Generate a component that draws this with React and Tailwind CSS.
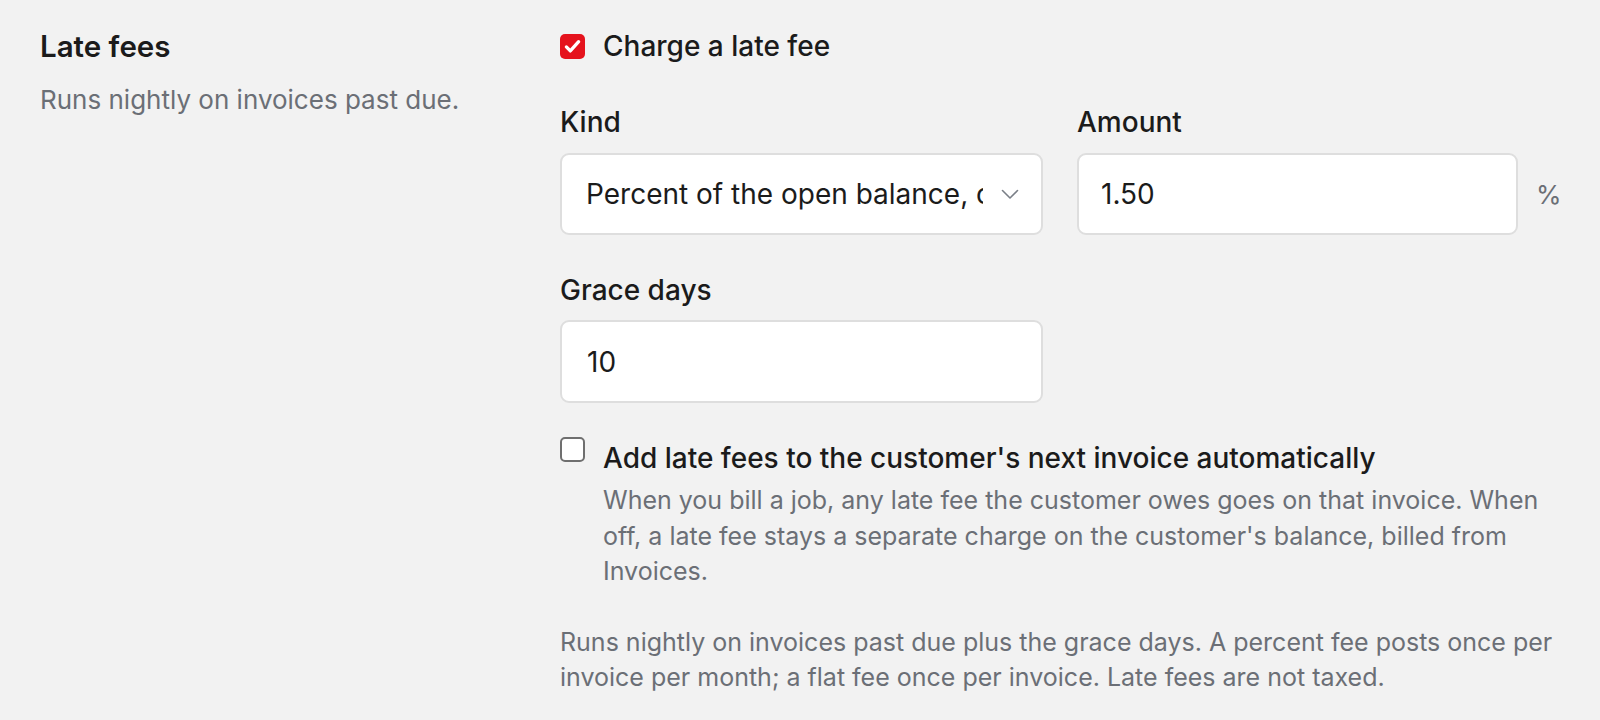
import { useState } from 'react';

function Check({ checked, onChange }) {
  return (
    <button
      type="button"
      role="checkbox"
      aria-checked={checked}
      onClick={() => onChange(!checked)}
      className={`flex h-[25px] w-[25px] shrink-0 items-center justify-center rounded-[5px] ${
        checked ? 'bg-[#e5131d]' : 'border-2 border-[#6f6f6f] bg-white'
      }`}>
      {checked && (
        <svg viewBox="0 0 24 24" className="h-[21px] w-[21px]" fill="none" stroke="white" strokeWidth="3.8" strokeLinecap="round" strokeLinejoin="round">
          <path d="M5 12.5l4.5 4.5L19 6.5" />
        </svg>
      )}
    </button>
  );
}

export default function App() {
  const [charge, setCharge] = useState(true);
  const [autoAdd, setAutoAdd] = useState(false);
  const [kind, setKind] = useState('percent');
  const [amount, setAmount] = useState('1.50');
  const [grace, setGrace] = useState('10');

  return (
    <main
      className="min-h-[720px] bg-[#f2f2f2] px-10 pt-[28px] text-[#1b1b1b]"
      style={{ fontFamily: 'Inter, "Noto Sans", sans-serif' }}>
      <div className="grid grid-cols-[520px_1000px]">
        <div>
          <h2 className="text-[29.5px] font-semibold leading-[36px]">Late fees</h2>
          <p className="mt-[18px] text-[26px] leading-[36px] text-[#6b6f76]">Runs nightly on invoices past due.</p>
        </div>

        <div>
          <label className="flex items-center gap-[18px]">
            <Check checked={charge} onChange={setCharge} />
            <span className="text-[28px] font-medium leading-[36px]">Charge a late fee</span>
          </label>

          <div className="mt-[40px] grid grid-cols-2 gap-x-[34px]">
            <div>
              <div className="text-[28px] font-medium leading-[36px]">Kind</div>
              <div className="relative mt-[13px]">
                <select
                  value={kind}
                  onChange={(e) => setKind(e.target.value)}
                  className="h-[82px] w-full appearance-none rounded-[9px] border-2 border-[#dedede] bg-white pl-[24px] pr-[58px] text-[28px] outline-none">
                  <option value="percent">Percent of the open balance, once a month</option>
                  <option value="flat">Flat amount, once per invoice</option>
                </select>
                <svg viewBox="0 0 20 20" className="pointer-events-none absolute right-[23px] top-1/2 h-[20px] w-[20px] -translate-y-1/2" fill="none" stroke="#7a7f87" strokeWidth="1.6" strokeLinecap="round" strokeLinejoin="round">
                  <path d="M2.5 6.5l7.5 7.5 7.5-7.5" />
                </svg>
              </div>
            </div>
            <div>
              <div className="text-[28px] font-medium leading-[36px]">Amount</div>
              <div className="mt-[13px] flex items-center gap-[18px]">
                <input
                  value={amount}
                  onChange={(e) => setAmount(e.target.value)}
                  className="h-[82px] min-w-0 flex-1 rounded-[9px] border-2 border-[#dedede] bg-white px-[22px] text-[28px] outline-none"
                />
                <span className="w-[24px] text-[26px] text-[#6b6f76]">%</span>
              </div>
            </div>
            <div className="mt-[37px]">
              <div className="text-[28px] font-medium leading-[36px]">Grace days</div>
              <input
                value={grace}
                onChange={(e) => setGrace(e.target.value)}
                className="mt-[12px] h-[83px] w-full rounded-[9px] border-2 border-[#dedede] bg-white px-[25px] text-[28px] outline-none"
              />
            </div>
          </div>

          <div className="mt-[34px] flex items-start gap-[18px]">
            <Check checked={autoAdd} onChange={setAutoAdd} />
            <div>
              <div className="text-[28px] font-medium leading-[42px]">Add late fees to the customer's next invoice automatically</div>
              <p className="mt-[4px] text-[25px] leading-[35.5px] text-[#6b6f76]">
                When you bill a job, any late fee the customer owes goes on that invoice. When off, a late fee stays a separate charge on the customer's balance, billed from Invoices.
              </p>
            </div>
          </div>

          <p className="mt-[35px] text-[25px] leading-[35.5px] text-[#6b6f76]">
            Runs nightly on invoices past due plus the grace days. A percent fee posts once per invoice per month; a flat fee once per invoice. Late fees are not taxed.
          </p>
        </div>
      </div>
    </main>
  );
}
